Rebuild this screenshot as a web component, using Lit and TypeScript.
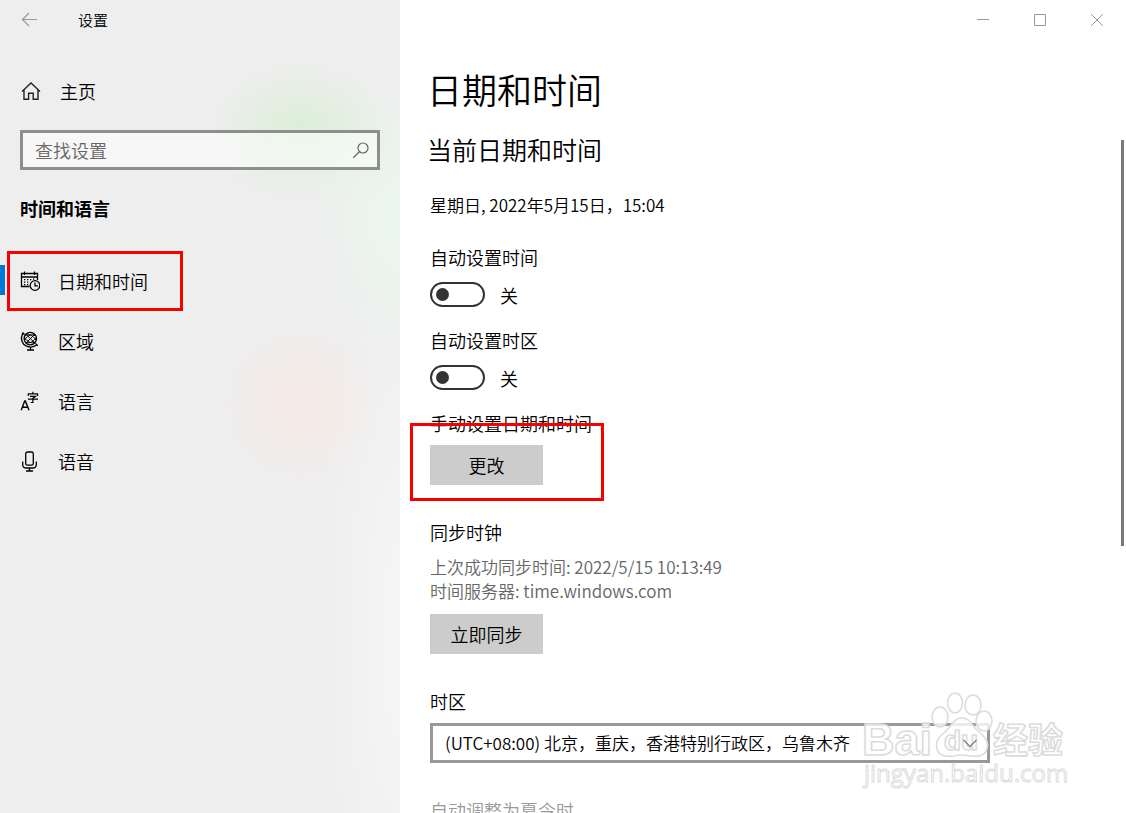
import { LitElement, html, css, svg } from "lit";
import { customElement, state } from "lit/decorators.js";

const icons = {
  datetime: svg`
    <g fill="none" stroke="currentColor" stroke-width="1.3">
      <path d="M9.5 15.5H1.5V2.5H17.5V9M1.5 6H17.5M4.5 0.5V4M14.5 0.5V4"/>
      <circle cx="15" cy="14.5" r="4.8"/>
      <path d="M15 11.5V14.8H18"/>
    </g>
    <path fill="currentColor" d="M4 8h1.3v1.3H4zM7 8h1.3v1.3H7zM10 8h1.3v1.3H10zM13 7.6h1.3v1.1H13zM4 10.5h1.3v1.3H4zM7 10.5h1.3v1.3H7zM4 13h1.3v1.3H4zM7 13h1.3v1.3H7z"/>`,
  region: svg`
    <g fill="none" stroke="currentColor" stroke-width="1.3">
      <circle cx="10.3" cy="7.6" r="6.2"/>
      <g stroke-width="1">
        <path d="M6 3.2L14.8 12M14.8 3.2L6 12M5.6 4.6C8 2.8 12.5 3.4 16 9.2M15 4.6C12.5 2.8 8 3.4 4.6 9.2M5.6 11C8 12.6 12.8 12 16 6.6M15 11C12.5 12.6 8 12 4.6 6.6"/>
      </g>
      <path d="M3.4 1.4L2.4 3.4C0.2 8 2 13 6.5 15.2C10 16.6 14.2 16 17 13.6M2 2L4.8 3.4M15.4 12.4L17.8 14.8M10.5 16V19M7 19H14"/>
    </g>`,
  language: svg`
    <g fill="none" stroke="currentColor" stroke-width="1.4">
      <path d="M1.2 19.3L4.7 10H5.4L9 19.3M2.4 16.2H7.8"/>
      <path stroke-width="1.2" d="M12.8 0.8V2.6M8.3 5V2.9H17.6V5M10 5.3H15.6L12.9 7.3V11.5H10.8M7.9 8.2H18"/>
    </g>`,
  speech: svg`
    <g fill="none" stroke="currentColor" stroke-width="1.3">
      <rect x="5.7" y="1" width="7.6" height="13.2" rx="1.8"/>
      <path d="M2.7 10.5V13.5Q2.7 17 6.3 17H12.7Q16.3 17 16.3 13.5V10.5M9.5 17V20M6 20H13"/>
    </g>`,
};

type IconName = keyof typeof icons;

const sections: { icon: IconName; label: string }[] = [
  { icon: "datetime", label: "日期和时间" },
  { icon: "region", label: "区域" },
  { icon: "language", label: "语言" },
  { icon: "speech", label: "语音" },
];

@customElement("app-root")
export class AppRoot extends LitElement {
  @state() private autoTime = false;
  @state() private autoZone = false;

  static styles = css`
    :host {
      display: block;
      height: 100vh;
      overflow: hidden;
      position: relative;
      color: #000;
      background: #fff;
      font: 350 18px/24px "Noto Sans CJK SC", sans-serif;
    }
    * { box-sizing: border-box; }
    h1, h2, h3, p { margin: 0; font-weight: inherit; font-size: inherit; }
    button, input, select { font: inherit; color: inherit; margin: 0; border: 0; border-radius: 0; }
    svg { display: block; }
    .layout { display: grid; grid-template-columns: 400px minmax(0, 1fr); height: 100%; }

    .side {
      background:
        radial-gradient(ellipse 90px 60px at 300px 122px, rgba(208, 238, 200, .5), transparent),
        radial-gradient(ellipse 110px 60px at 310px 150px, rgba(220, 242, 220, .5), transparent),
        radial-gradient(ellipse 90px 150px at 400px 215px, rgba(234, 248, 238, .9), transparent),
        radial-gradient(ellipse 80px 80px at 300px 405px, rgba(250, 230, 222, .6), transparent),
        radial-gradient(ellipse 80px 400px at 400px 640px, rgba(247, 247, 247, .9), transparent),
        #eee;
    }
    .bar { display: flex; align-items: center; height: 40px; padding-left: 20px; font-size: 15px; }
    .back { width: 20px; height: 40px; padding: 0; background: none; color: #999; margin-right: 38px; }
    .home { display: flex; align-items: center; gap: 19px; height: 40px; margin: 31px 0 19px 20px; color: inherit; text-decoration: none; }
    .search { display: flex; align-items: center; height: 40px; margin: 0 20px; border: 3px solid #8d8f8d; background: rgba(255, 255, 255, .5); padding: 0 7px 0 12px; }
    .search input { flex: 1; min-width: 0; height: 34px; padding: 0; background: none; outline: none; }
    .search input::placeholder { color: #666; opacity: 1; }
    .search button { padding: 0; background: none; color: #666; }
    .group { margin: 26px 20px 31px; font-weight: 700; }
    .item { position: relative; display: flex; align-items: center; gap: 18px; height: 60px; padding-left: 20px; color: inherit; text-decoration: none; }
    .item.active::before { content: ""; position: absolute; left: 0; top: 14px; width: 5px; height: 30px; background: #0078d7; }
    .mark { position: absolute; border: 3px solid #f90000; pointer-events: none; }
    .mark-nav { left: 7px; top: 0; width: 176px; height: 60px; }
    .mark-change { left: -20px; top: 12px; width: 194px; height: 78px; }

    .main { display: flex; flex-direction: column; min-width: 0; overflow: hidden; position: relative; }
    .window { display: flex; justify-content: flex-end; flex: none; height: 40px; padding-right: 1px; }
    .window button { width: 57px; height: 40px; padding: 0; background: none; color: #999; display: grid; place-items: center; }
    .content { padding: 25px 30px 0; }
    .titles { margin-left: -3px; }
    h1 { font-size: 35px; line-height: 48px; }
    h2 { font-size: 25px; line-height: 32px; margin-top: 20px; }
    .mixed { font-size: 17px; }
    .now { margin: 28px 0; }
    .switch { display: grid; gap: 13px; margin-bottom: 21px; }
    .row { display: flex; align-items: center; gap: 15px; height: 25px; }
    .toggle { appearance: none; position: relative; width: 55px; height: 25px; border: 2px solid #333; border-radius: 13px; }
    .toggle::before { content: ""; position: absolute; left: 4px; top: 4px; width: 13px; height: 13px; border-radius: 50%; background: #333; }
    .toggle:checked { background: #0078d7; border-color: #0078d7; }
    .toggle:checked::before { left: 34px; background: #fff; }
    .block { position: relative; display: grid; justify-items: start; margin-bottom: 35px; }
    .action { width: 113px; height: 40px; padding: 0; background: #ccc; }
    .change { gap: 10px; }
    .sync { gap: 11px; }
    .info { color: #666; }
    .zone { gap: 10px; }
    .picker { display: grid; align-items: center; width: 100%; max-width: 560px; }
    .picker select, .picker svg { grid-area: 1 / 1; }
    .picker select { appearance: none; width: 100%; height: 40px; padding: 0 36px 0 12px; border: 3px solid #999; background: #fff; }
    .picker svg { justify-self: end; margin-right: 13px; pointer-events: none; z-index: 1; }
    .dim { color: #999; }
    .thumb { position: absolute; right: 2px; top: 140px; width: 3px; height: 406px; background: #7a7a7a; }
    .watermark { position: absolute; right: 56px; bottom: 18px; pointer-events: none; }
  `;

  private renderSwitch(id: string, label: string, on: boolean, change: (v: boolean) => void) {
    return html`
      <div class="switch">
        <label for=${id}>${label}</label>
        <div class="row">
          <input class="toggle" id=${id} type="checkbox" role="switch" .checked=${on}
            @change=${(e: Event) => change((e.target as HTMLInputElement).checked)}>
          <span>${on ? "开" : "关"}</span>
        </div>
      </div>`;
  }

  private renderWatermark() {
    return html`
      <svg class="watermark" width="210" height="105" viewBox="0 0 210 105" aria-hidden="true"
        fill="#fff" fill-opacity=".8" stroke="#dcdcdc" stroke-width="1.6" stroke-linejoin="round"
        font-family="Liberation Sans" font-weight="700">
        <text x="2" y="65" font-size="45">Bai</text>
        <ellipse cx="80" cy="27" rx="8" ry="10"/>
        <ellipse cx="95" cy="13" rx="7.5" ry="10"/>
        <ellipse cx="113" cy="15" rx="8" ry="10"/>
        <ellipse cx="124" cy="31" rx="8" ry="10"/>
        <path d="M102 28C94 28 91 36 86 41C79 47 75 51 77 59C79 67 87 67 94 66Q102 64 110 66C118 67 125 66 127 59C129 51 125 47 118 41C112 36 110 28 102 28Z"/>
        <text x="84" y="60" font-size="28">du</text>
        <text x="133" y="63" font-size="35" font-family="Noto Sans CJK SC">经验</text>
        <text x="4" y="92" font-size="24" font-family="Open Sans" font-weight="400" stroke-width="1">jingyan.baidu.com</text>
      </svg>`;
  }

  render() {
    return html`
      <div class="layout">
        <aside class="side">
          <div class="bar">
            <button class="back" aria-label="返回">
              <svg width="20" height="20" viewBox="0 0 20 20" fill="none" stroke="currentColor" stroke-width="1.2"><path d="M17 9.5H2.5M9 3L2.5 9.5L9 16"/></svg>
            </button>
            <span>设置</span>
          </div>
          <a class="home" href="#">
            <svg width="21" height="20" viewBox="0 0 21 20" fill="none" stroke="#222" stroke-width="1.4"><path d="M2 10.5L11 2L20 10.5M4 9V18.3H8.6V12.3H13.2V18.3H18V9"/></svg>
            <span>主页</span>
          </a>
          <div class="search">
            <input type="text" placeholder="查找设置" aria-label="查找设置">
            <button aria-label="搜索">
              <svg width="18" height="18" viewBox="0 0 18 18" fill="none" stroke="currentColor" stroke-width="1.2"><circle cx="11" cy="7" r="5"/><path d="M7.4 10.7L1.3 16.7"/></svg>
            </button>
          </div>
          <h3 class="group">时间和语言</h3>
          <nav>
            ${sections.map((s, i) => html`
              <a class="item ${i === 0 ? "active" : ""}" href="#">
                <svg width="20" height="21" viewBox="0 0 20 21">${icons[s.icon]}</svg>
                <span>${s.label}</span>
                ${i === 0 ? html`<i class="mark mark-nav"></i>` : ""}
              </a>`)}
          </nav>
        </aside>
        <main class="main">
          <div class="window">
            <button aria-label="最小化"><svg width="12" height="12" viewBox="0 0 12 12" stroke="currentColor"><path d="M0 5.5H12"/></svg></button>
            <button aria-label="最大化"><svg width="12" height="12" viewBox="0 0 12 12" fill="none" stroke="currentColor"><path d="M.5.5h11v11H.5z"/></svg></button>
            <button aria-label="关闭"><svg width="12" height="12" viewBox="0 0 12 12" stroke="currentColor"><path d="M0 0L12 12M12 0L0 12"/></svg></button>
          </div>
          <div class="content">
            <header class="titles">
              <h1>日期和时间</h1>
              <h2>当前日期和时间</h2>
            </header>
            <p class="now mixed">星期日, 2022年5月15日，15:04</p>
            ${this.renderSwitch("auto-time", "自动设置时间", this.autoTime, (v) => (this.autoTime = v))}
            ${this.renderSwitch("auto-zone", "自动设置时区", this.autoZone, (v) => (this.autoZone = v))}
            <div class="block change">
              <span id="manual">手动设置日期和时间</span>
              <button class="action" aria-describedby="manual">更改</button>
              <i class="mark mark-change"></i>
            </div>
            <div class="block sync">
              <h3>同步时钟</h3>
              <div class="info mixed">
                <p>上次成功同步时间: 2022/5/15 10:13:49</p>
                <p>时间服务器: time.windows.com</p>
              </div>
              <button class="action">立即同步</button>
            </div>
            <div class="block zone">
              <label for="zone">时区</label>
              <div class="picker">
                <select id="zone" class="mixed">
                  <option>(UTC+08:00) 北京，重庆，香港特别行政区，乌鲁木齐</option>
                </select>
                <svg width="14" height="9" viewBox="0 0 14 9" fill="none" stroke="#777" stroke-width="1.1"><path d="M.5 1L7 7.5L13.5 1"/></svg>
              </div>
            </div>
            <p class="dim">自动调整为夏令时</p>
          </div>
          <div class="thumb"></div>
        </main>
      </div>
      ${this.renderWatermark()}
    `;
  }
}
